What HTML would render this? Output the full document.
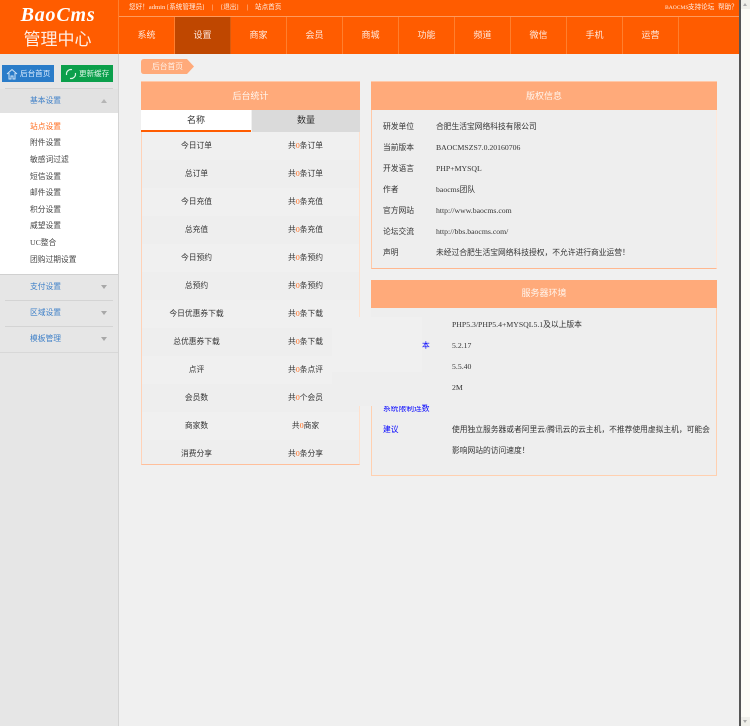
<!DOCTYPE html>
<html lang="zh"><head><meta charset="utf-8"><title>管理中心</title>
<style>
html,body{margin:0;padding:0;width:750px;height:726px;overflow:hidden;background:#f0f0f0}
body{position:relative;font-family:"Liberation Serif","Noto Sans CJK SC",serif;color:#333;font-size:7.75px;filter:blur(.3px)}
div,a,span.a{box-sizing:border-box}
.a{position:absolute;white-space:nowrap}
.c{text-align:center}
.t{position:absolute;top:2px;font-size:6.6px;line-height:12px;color:#fff0e6;white-space:nowrap}
.nav{position:absolute;top:17px;height:37px;width:56px;line-height:37px;text-align:center;color:#ffeadf;font-size:9px;border-right:1px solid #ff7f2e}
.side{position:absolute;left:30px;font-size:7.75px;line-height:12px;color:#444;white-space:nowrap}
.sh{position:absolute;left:30px;font-size:7.75px;line-height:12px;color:#3f80c8;white-space:nowrap}
.tri{position:absolute;left:101px;width:0;height:0;border-left:3.5px solid transparent;border-right:3.5px solid transparent}
.row{position:absolute;left:0;width:217px;height:28px;line-height:27px;font-size:7.75px;color:#333}
.row span{position:absolute;top:0;width:109px;text-align:center}
.row span+span{left:109px}
.row b{font-weight:normal;color:#ff6a1a}
.l{position:absolute;left:11px;font-size:7.75px;line-height:12px;color:#333;white-space:nowrap}
.v{position:absolute;font-size:7.75px;line-height:12px;color:#333;white-space:nowrap}
.hd{position:absolute;left:0;right:0;top:0;background:#ffaa7a;color:#fff6ef;font-size:9px;text-align:center}
</style></head><body>
<!-- header -->
<div class="a" style="left:0;top:0;width:739px;height:54px;background:#ff5c00"></div>
<div class="a c" style="left:0;top:5px;width:116px;font:italic bold 20px/20px 'Liberation Serif',serif;color:#fff;letter-spacing:.8px">BaoCms</div>
<div class="a c" style="left:0;top:29px;width:115px;font:17px/22px 'Liberation Sans','Noto Sans CJK SC',sans-serif;color:#ffeee5">管理中心</div>
<div class="a" style="left:118px;top:0;width:1px;height:54px;background:#ff7f2e"></div>
<div class="a" style="left:119px;top:16px;width:620px;height:1px;background:#ff9a5c"></div>
<div class="t" style="left:129px">您好！admin</div>
<div class="t" style="left:167px">[系统管理员]</div>
<div class="t" style="left:212px">|</div>
<div class="t" style="left:221px">[退出]</div>
<div class="t" style="left:247px">|</div>
<div class="t" style="left:255px">站点首页</div>
<div class="t" style="left:665px;font-size:5.6px">BAOCMS</div>
<div class="t" style="left:688px">支持论坛</div>
<div class="t" style="left:718px">帮助？</div>
<div class="nav" style="left:119px">系统</div>
<div class="nav" style="left:175px;background:#bf4700;border-right:1px solid #d95c10">设置</div>
<div class="nav" style="left:231px">商家</div>
<div class="nav" style="left:287px">会员</div>
<div class="nav" style="left:343px">商城</div>
<div class="nav" style="left:399px">功能</div>
<div class="nav" style="left:455px">频道</div>
<div class="nav" style="left:511px">微信</div>
<div class="nav" style="left:567px">手机</div>
<div class="nav" style="left:623px">运营</div>
<!-- sidebar -->
<div class="a" style="left:0;top:54px;width:119px;height:672px;background:#e6e6e6;border-right:1px solid #d4d4d4"></div>
<div class="a" style="left:2px;top:65px;width:52px;height:17px;background:#2a7cc9;color:#dfeeff;font-size:7.6px;line-height:17px;padding-left:18px">后台首页</div>
<svg class="a" style="left:6px;top:68px" width="12" height="12" viewBox="0 0 12 12" fill="none" stroke="#cfe4f8"><path d="M1 6 6 1.5 11 6M3 5v6h2V8h2v3h2V5"/></svg>
<div class="a" style="left:61px;top:65px;width:52px;height:17px;background:#0b9f4b;color:#dcf5e6;font-size:7.6px;line-height:17px;padding-left:18px">更新缓存</div>
<svg class="a" style="left:65px;top:68px" width="12" height="12" viewBox="0 0 12 12" fill="none" stroke="#dcf5e6" stroke-width="1.2"><path d="M1.6 7A4.5 4.5 0 0 1 7 1.6M10.4 5A4.5 4.5 0 0 1 5 10.4"/></svg>
<div class="a" style="left:5px;top:88px;width:108px;height:1px;background:#d2d2d2"></div>
<div class="a" style="left:0;top:89px;width:118px;height:24px;background:#e2e2e2"></div>
<div class="sh" style="top:95px">基本设置</div><div class="tri" style="top:99px;border-bottom:4px solid #b5b5b5"></div>
<div class="a" style="left:0;top:113px;width:118px;height:161px;background:#fff"></div>
<div class="side" style="top:121px;color:#ff6a1a">站点设置</div>
<div class="side" style="top:137px">附件设置</div>
<div class="side" style="top:154px">敏感词过滤</div>
<div class="side" style="top:171px">短信设置</div>
<div class="side" style="top:187px">邮件设置</div>
<div class="side" style="top:204px">积分设置</div>
<div class="side" style="top:220px">威望设置</div>
<div class="side" style="top:237px">UC整合</div>
<div class="side" style="top:254px">团购过期设置</div>
<div class="a" style="left:0;top:274px;width:118px;height:1px;background:#d0d0d0"></div>
<div class="sh" style="top:281px">支付设置</div><div class="tri" style="top:285px;border-top:4px solid #a8a8a8"></div>
<div class="a" style="left:5px;top:300px;width:108px;height:1px;background:#d4d4d4"></div>
<div class="sh" style="top:307px">区域设置</div><div class="tri" style="top:311px;border-top:4px solid #a8a8a8"></div>
<div class="a" style="left:5px;top:326px;width:108px;height:1px;background:#d4d4d4"></div>
<div class="sh" style="top:333px">模板管理</div><div class="tri" style="top:337px;border-top:4px solid #a8a8a8"></div>
<div class="a" style="left:0;top:352px;width:118px;height:1px;background:#d8d8d8"></div>
<!-- breadcrumb -->
<svg class="a" style="left:141px;top:59px" width="53" height="15"><path d="M3 0H46L53 7.5 46 15H3Q0 15 0 12V3Q0 0 3 0Z" fill="#ffaa7a"/></svg>
<div class="a" style="left:152px;top:60px;font-size:7.75px;line-height:13px;color:#fff3ea">后台首页</div>
<!-- left panel -->
<div class="a" style="left:141px;top:81px;width:219px;height:384px;border:1px solid #ffe0cc;border-left-color:#ffd2b8;border-bottom-color:#ffbf9b;border-top:0;background:#f0f0f0">
<div class="hd" style="left:-1px;right:-1px;height:29px;line-height:28px;border-top:1px solid #ffc9aa">后台统计</div>
<div class="a c" style="left:-1px;top:29px;width:110px;height:22px;background:#fff;border-bottom:2px solid #ff5c00;font-size:9px;line-height:21px;color:#333">名称</div>
<div class="a c" style="left:110px;top:29px;width:108px;height:22px;background:#dadada;font-size:9px;line-height:21px;color:#333">数量</div>
<div class="row" style="top:51px"><span>今日订单</span><span>共<b>0</b>条订单</span></div>
<div class="row" style="top:79px;background:#eee"><span>总订单</span><span>共<b>0</b>条订单</span></div>
<div class="row" style="top:107px"><span>今日充值</span><span>共<b>0</b>条充值</span></div>
<div class="row" style="top:135px;background:#eee"><span>总充值</span><span>共<b>0</b>条充值</span></div>
<div class="row" style="top:163px"><span>今日预约</span><span>共<b>0</b>条预约</span></div>
<div class="row" style="top:191px;background:#eee"><span>总预约</span><span>共<b>0</b>条预约</span></div>
<div class="row" style="top:219px"><span>今日优惠券下载</span><span>共<b>0</b>条下载</span></div>
<div class="row" style="top:247px;background:#eee"><span>总优惠券下载</span><span>共<b>0</b>条下载</span></div>
<div class="row" style="top:275px"><span>点评</span><span>共<b>0</b>条点评</span></div>
<div class="row" style="top:303px;background:#eee"><span>会员数</span><span>共<b>0</b>个会员</span></div>
<div class="row" style="top:331px"><span>商家数</span><span>共<b>0</b>商家</span></div>
<div class="row" style="top:359px;height:24px;background:#eee"><span>消费分享</span><span>共<b>0</b>条分享</span></div>
</div>
<!-- right panel 1 -->
<div class="a" style="left:371px;top:81px;width:346px;height:188px;background:#eee;border:1px solid #ffc9a8;border-top:0;border-bottom-color:#ffb78f;border-right:1px solid #ffe8da">
<div class="hd" style="left:-1px;right:-1px;height:29px;line-height:28px;border-top:1px solid #ffc9aa">版权信息</div>
<div class="l" style="top:40px">研发单位</div><div class="v" style="left:64px;top:40px">合肥生活宝网络科技有限公司</div>
<div class="l" style="top:61px">当前版本</div><div class="v" style="left:64px;top:61px">BAOCMSZS7.0.20160706</div>
<div class="l" style="top:82px">开发语言</div><div class="v" style="left:64px;top:82px">PHP+MYSQL</div>
<div class="l" style="top:103px">作者</div><div class="v" style="left:64px;top:103px">baocms团队</div>
<div class="l" style="top:124px">官方网站</div><div class="v" style="left:64px;top:124px">http://www.baocms.com</div>
<div class="l" style="top:145px">论坛交流</div><div class="v" style="left:64px;top:145px">http://bbs.baocms.com/</div>
<div class="l" style="top:166px">声明</div><div class="v" style="left:64px;top:166px">未经过合肥生活宝网络科技授权，不允许进行商业运营！</div>
</div>
<!-- right panel 2 -->
<div class="a" style="left:371px;top:280px;width:346px;height:196px;background:#eee;border:1px solid #ffd0b0;border-top:0">
<div class="hd" style="left:-1px;right:-1px;height:28px;line-height:27px">服务器环境</div>
<div class="l" style="top:39px;color:#00f">环境要求</div><div class="v" style="left:80px;top:39px">PHP5.3/PHP5.4+MYSQL5.1及以上版本</div>
<div class="l" style="top:60px;left:28px;color:#00f">PHP版本</div><div class="v" style="left:80px;top:60px">5.2.17</div>
<div class="l" style="top:81px;color:#00f">数据库</div><div class="v" style="left:80px;top:81px">5.5.40</div>
<div class="l" style="top:102px;color:#00f">上传大小</div><div class="v" style="left:80px;top:102px">2M</div>
<div class="l" style="top:123px;color:#00f">系统限制连数</div>
<div class="l" style="top:144px;color:#00f">建议</div><div class="v" style="left:80px;top:144px">使用独立服务器或者阿里云/腾讯云的云主机，不推荐使用虚拟主机，可能会</div>
<div class="v" style="left:80px;top:165px">影响网站的访问速度！</div>
</div>
<!-- blank overlay patches -->
<div class="a" style="left:332px;top:317px;width:90px;height:55px;background:#f0f0f0"></div>
<div class="a" style="left:332px;top:372px;width:90px;height:34px;background:#eee"></div>
<div class="a" style="left:371px;top:308px;width:51px;height:9px;background:#eee"></div>
<!-- scrollbar -->
<div class="a" style="left:739px;top:0;width:2px;height:726px;background:#555"></div>
<div class="a" style="left:741px;top:0;width:9px;height:726px;background:#fcfcf6"></div>
<div class="a" style="left:741px;top:0;width:9px;height:9px;background:#f0f0ea"></div>
<div class="a" style="left:743px;top:3px;width:0;height:0;border-left:2.5px solid transparent;border-right:2.5px solid transparent;border-bottom:3px solid #aaa"></div>
<div class="a" style="left:741px;top:717px;width:9px;height:9px;background:#f0f0ea"></div>
<div class="a" style="left:743px;top:720px;width:0;height:0;border-left:2.5px solid transparent;border-right:2.5px solid transparent;border-top:3px solid #aaa"></div>
</body></html>
